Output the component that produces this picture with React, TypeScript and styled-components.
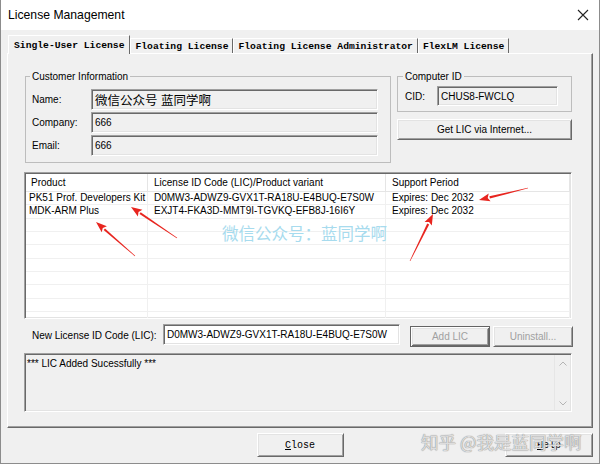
import React from "react";
import styled, { createGlobalStyle } from "styled-components";

const UI = `"Liberation Sans", Arial, sans-serif`;
const MONO = `"Liberation Mono", "Courier New", monospace`;
const CJK = `"Liberation Sans", "Noto Sans CJK SC", sans-serif`;

const GlobalStyle = createGlobalStyle`
  html, body { margin: 0; padding: 0; background: #f0f0f0; }
  * { box-sizing: border-box; }
`;

const Window = styled.div`
  position: relative;
  width: 600px;
  height: 464px;
  background: #f0f0f0;
  border: 1px solid #8c8c8c;
  border-top: none;
  display: flex;
  flex-direction: column;
  font-family: ${UI};
  font-size: 10px;
  color: #000;
  overflow: hidden;
`;

const TitleBar = styled.div`
  height: 30px;
  flex: none;
  background: #fff;
  display: flex;
  align-items: center;
  justify-content: space-between;
  padding: 0 10px 0 7px;
  font-size: 12.2px;
`;

const TabArea = styled.div`
  padding: 5px 6px 0 6px;
  display: flex;
  flex-direction: column;
`;

const TabStrip = styled.div`
  display: flex;
  align-items: flex-end;
  height: 19px;
  padding-left: 1px;
  margin-bottom: -1px;
  position: relative;
  z-index: 1;
`;

const Tab = styled.div<{ $active?: boolean }>`
  height: ${(p) => (p.$active ? 19 : 15)}px;
  margin-bottom: ${(p) => (p.$active ? 0 : 1)}px;
  padding: 0 ${(p) => (p.$active ? 5 : 4)}px;
  font-family: ${MONO};
  font-weight: bold;
  font-size: 9.7px;
  display: flex;
  align-items: center;
  background: #f0f0f0;
  border-top: 1px solid #fff;
  border-left: 1px solid #fff;
  border-right: 1px solid #696969;
  white-space: nowrap;
`;

const Panel = styled.div`
  height: 375px;
  border: 1px solid;
  border-color: #fff #696969 #696969 #fff;
  box-shadow: inset -1px -1px #a0a0a0;
  padding: 16px 20px 15px 16px;
  display: flex;
  flex-direction: column;
`;

const TopSection = styled.div`
  display: grid;
  grid-template-columns: 366px 1fr;
  column-gap: 6px;
  padding-left: 1px;
  align-items: start;
`;

const Group = styled.fieldset<{ $pad: string }>`
  margin: 0;
  padding: ${(p) => p.$pad};
  border: 1px solid #bdbdbd;
  min-width: 0;
`;

const Legend = styled.legend`
  padding: 0 2px;
  margin-left: -2px;
  font-size: 10px;
  line-height: 13px;
`;

const FormGrid = styled.div`
  display: grid;
  grid-template-columns: 59px 1fr;
  grid-auto-rows: 21px;
  row-gap: 2px;
  align-items: center;
`;

const Label = styled.span`
  font-size: 10px;
  white-space: nowrap;
`;

const Field = styled.div<{ $cjk?: boolean; $white?: boolean }>`
  height: 100%;
  display: flex;
  align-items: center;
  padding-left: 3px;
  background: ${(p) => (p.$white ? "#fff" : "#f0f0f0")};
  border: 1px solid;
  border-color: #a0a0a0 #fff #fff #a0a0a0;
  box-shadow: inset 1px 1px #696969, inset -1px -1px #e3e3e3;
  font-family: ${(p) => (p.$cjk ? CJK : UI)};
  font-size: ${(p) => (p.$cjk ? "12.5px" : "10px")};
  white-space: nowrap;
  overflow: hidden;
`;

const CidRow = styled.div`
  display: grid;
  grid-template-columns: 32px 1fr;
  height: 20px;
  align-items: center;
`;

const Button = styled.button<{ $default?: boolean; $w?: number; $h?: number; $mono?: boolean }>`
  width: ${(p) => (p.$w ? `${p.$w}px` : "100%")};
  height: ${(p) => p.$h ?? 21}px;
  flex: none;
  margin: 0;
  padding: 0;
  background: #f0f0f0;
  font-family: ${(p) => (p.$mono ? MONO : UI)};
  font-size: 10px;
  color: #000;
  border: 1px solid;
  border-color: ${(p) => (p.$default ? "#646464" : "#fff #696969 #696969 #fff")};
  box-shadow: ${(p) =>
    p.$default
      ? "inset 1px 1px #fff, inset -1px -1px #696969, inset 2px 2px #e3e3e3, inset -2px -2px #a0a0a0"
      : "inset 1px 1px #e3e3e3, inset -1px -1px #a0a0a0"};
  &:disabled {
    color: #a0a0a0;
  }
`;

const RightCol = styled.div`
  display: flex;
  flex-direction: column;
  gap: 7px;
`;

const ListView = styled.div`
  position: relative;
  margin-top: 9px;
  height: 147px;
  flex: none;
  background: #fff;
  border: 1px solid;
  border-color: #a0a0a0 #fff #fff #a0a0a0;
  box-shadow: inset 1px 1px #696969, inset -1px -1px #e3e3e3;
  padding: 1px;
  overflow: hidden;
`;

const Cols = `122px 238px 184px`;

const HeaderRow = styled.div`
  display: grid;
  grid-template-columns: ${Cols};
  height: 18px;
  border-bottom: 1px solid #e5e5e5;
  background: #fff;
`;

const HeaderCell = styled.div<{ $first?: boolean }>`
  padding-left: ${(p) => (p.$first ? 5 : 6)}px;
  line-height: 17px;
  border-right: 1px solid #e5e5e5;
  white-space: nowrap;
  overflow: hidden;
`;

const Row = styled.div`
  display: grid;
  grid-template-columns: ${Cols};
  height: 13.33px;
`;

const Cell = styled.div<{ $first?: boolean }>`
  padding-left: ${(p) => (p.$first ? 3 : 6)}px;
  line-height: 12.5px;
  border-right: 1px solid #f0f0f0;
  border-bottom: 1px solid #f0f0f0;
  white-space: nowrap;
  overflow: hidden;
`;

const ListWatermark = styled.div`
  position: absolute;
  left: 197px;
  top: 48px;
  font-family: "Noto Sans CJK SC", sans-serif;
  font-size: 16.5px;
  color: #a7dbee;
  white-space: nowrap;
`;

const LicRow = styled.div`
  margin-top: 5px;
  height: 23px;
  display: flex;
  align-items: center;
  padding-left: 8px;
`;

const LicLabel = styled.span`
  width: 131px;
  flex: none;
  white-space: nowrap;
`;

const LicInput = styled(Field)`
  width: 237px;
  height: 21px;
  flex: none;
  align-self: flex-start;
`;

const LicButtons = styled.div`
  display: flex;
  gap: 3px;
  margin-left: 10px;
  align-self: flex-end;
`;

const StatusBox = styled.div`
  margin-top: 6px;
  height: 59px;
  flex: none;
  display: flex;
  background: #f0f0f0;
  border: 1px solid;
  border-color: #a0a0a0 #fff #fff #a0a0a0;
  box-shadow: inset 1px 1px #696969, inset -1px -1px #e3e3e3;
  padding: 1px;
`;

const StatusText = styled.div`
  flex: 1;
  padding: 2px 0 0 1px;
  line-height: 13px;
`;

const ScrollBar = styled.div`
  width: 16px;
  flex: none;
  border-left: 1px solid #e6e6e6;
  display: flex;
  flex-direction: column;
  justify-content: space-between;
  align-items: center;
  padding: 6px 0 4px;
`;

const Footer = styled.div`
  flex: 1;
  display: grid;
  grid-template-columns: 1fr auto 1fr;
  align-items: start;
  padding-top: 5px;
`;

const HelpSlot = styled.div`
  justify-self: end;
  margin-right: 6px;
`;

const ZhihuMark = styled.div`
  position: absolute;
  left: 420px;
  top: 429px;
  font-family: "Noto Sans CJK SC", sans-serif;
  font-size: 17.5px;
  color: rgba(236, 236, 236, 0.85);
  text-shadow: 0 0 1px #8c8c8c, 0 0 1px #9a9a9a;
  white-space: nowrap;
  pointer-events: none;
`;

const Overlay = styled.svg`
  position: absolute;
  left: 0;
  top: 0;
  pointer-events: none;
`;

function Arrow({ x1, y1, x2, y2 }: { x1: number; y1: number; x2: number; y2: number }) {
  const dx = x2 - x1;
  const dy = y2 - y1;
  const len = Math.hypot(dx, dy);
  const ux = dx / len;
  const uy = dy / len;
  const nx = -uy;
  const ny = ux;
  const headLen = 11;
  const headW = 4;
  const bx = x2 - ux * headLen;
  const by = y2 - uy * headLen;
  const shaft = [
    [x1 + nx * 0.3, y1 + ny * 0.3],
    [bx + nx * 1.1, by + ny * 1.1],
    [bx - nx * 1.1, by - ny * 1.1],
    [x1 - nx * 0.3, y1 - ny * 0.3],
  ];
  const head = [
    [x2, y2],
    [bx + nx * headW, by + ny * headW],
    [bx + ux * 2, by + uy * 2],
    [bx - nx * headW, by - ny * headW],
  ];
  const pts = (a: number[][]) => a.map((p) => p.map((v) => v.toFixed(1)).join(",")).join(" ");
  return (
    <g fill="#e8251f">
      <polygon points={pts(shaft)} />
      <polygon points={pts(head)} />
    </g>
  );
}

const rows = [
  ["PK51 Prof. Developers Kit", "D0MW3-ADWZ9-GVX1T-RA18U-E4BUQ-E7S0W", "Expires: Dec 2032"],
  ["MDK-ARM Plus", "EXJT4-FKA3D-MMT9I-TGVKQ-EFB8J-16I6Y", "Expires: Dec 2032"],
];

export default function App() {
  const allRows = [...rows, ...Array.from({ length: 8 }, () => ["", "", ""])];
  return (
    <>
      <GlobalStyle />
      <Window>
        <TitleBar>
          <span>License Management</span>
          <svg width="12" height="12" viewBox="0 0 12 12">
            <path d="M1 1 L11 11 M11 1 L1 11" stroke="#222" strokeWidth="1.1" />
          </svg>
        </TitleBar>
        <TabArea>
          <TabStrip>
            <Tab $active>Single-User License</Tab>
            <Tab>Floating License</Tab>
            <Tab>Floating License Administrator</Tab>
            <Tab>FlexLM License</Tab>
          </TabStrip>
          <Panel>
            <TopSection>
              <Group $pad="6px 12px 6px 6px">
                <Legend>Customer Information</Legend>
                <FormGrid>
                  <Label>Name:</Label>
                  <Field $cjk>微信公众号 蓝同学啊</Field>
                  <Label>Company:</Label>
                  <Field>666</Field>
                  <Label>Email:</Label>
                  <Field>666</Field>
                </FormGrid>
              </Group>
              <RightCol>
                <Group $pad="3px 13px 5px 7px">
                  <Legend>Computer ID</Legend>
                  <CidRow>
                    <Label>CID:</Label>
                    <Field>CHUS8-FWCLQ</Field>
                  </CidRow>
                </Group>
                <Button>Get LIC via Internet...</Button>
              </RightCol>
            </TopSection>
            <ListView>
              <HeaderRow>
                <HeaderCell $first>Product</HeaderCell>
                <HeaderCell>License ID Code (LIC)/Product variant</HeaderCell>
                <HeaderCell>Support Period</HeaderCell>
              </HeaderRow>
              {allRows.map((r, i) => (
                <Row key={i}>
                  <Cell $first>{r[0]}</Cell>
                  <Cell>{r[1]}</Cell>
                  <Cell>{r[2]}</Cell>
                </Row>
              ))}
              <ListWatermark>微信公众号：蓝同学啊</ListWatermark>
            </ListView>
            <LicRow>
              <LicLabel>New License ID Code (LIC):</LicLabel>
              <LicInput $white>D0MW3-ADWZ9-GVX1T-RA18U-E4BUQ-E7S0W</LicInput>
              <LicButtons>
                <Button $default $w={80} disabled>
                  Add LIC
                </Button>
                <Button $w={80} disabled>
                  Uninstall...
                </Button>
              </LicButtons>
            </LicRow>
            <StatusBox>
              <StatusText>*** LIC Added Sucessfully ***</StatusText>
              <ScrollBar>
                <svg width="8" height="5" viewBox="0 0 8 5">
                  <path d="M0.5 4.5 L4 1 L7.5 4.5" stroke="#b4b4b4" fill="none" />
                </svg>
                <svg width="8" height="5" viewBox="0 0 8 5">
                  <path d="M0.5 0.5 L4 4 L7.5 0.5" stroke="#b4b4b4" fill="none" />
                </svg>
              </ScrollBar>
            </StatusBox>
          </Panel>
        </TabArea>
        <Footer>
          <span />
          <Button $w={87} $h={24} $mono>
            <u>C</u>lose
          </Button>
          <HelpSlot>
            <Button $w={88} $h={24} $mono>
              <u>H</u>elp
            </Button>
          </HelpSlot>
        </Footer>
        <ZhihuMark>知乎 @我是蓝同学啊</ZhihuMark>
        <Overlay width="600" height="464" viewBox="0 0 600 464">
          <Arrow x1={176} y1={238} x2={130} y2={207} />
          <Arrow x1={134} y1={256} x2={95} y2={222} />
          <Arrow x1={409} y1={261} x2={432} y2={214} />
          <Arrow x1={527} y1={188} x2={478} y2={200} />
        </Overlay>
      </Window>
    </>
  );
}
